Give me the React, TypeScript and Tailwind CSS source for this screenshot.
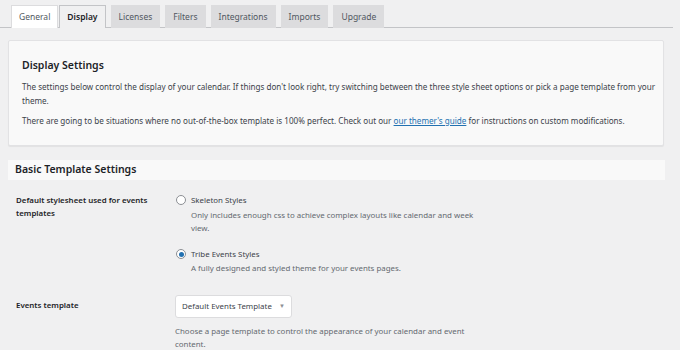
import React from 'react';

const tabs = ['General', 'Display', 'Licenses', 'Filters', 'Integrations', 'Imports', 'Upgrade'];

function Radio({ checked }: { checked?: boolean }) {
    return (
        <span className="mt-[1px] w-[10px] h-[10px] rounded-full border border-[#8c8f94] bg-white flex items-center justify-center shrink-0">
            {checked && <span className="w-[5px] h-[5px] rounded-full bg-[#2271b1]"></span>}
        </span>
    );
}

export default function App() {
    return (
        <div className="w-[680px] h-[350px] overflow-hidden bg-[#f0f0f1] text-[#3c434a] font-['Noto_Sans',sans-serif]">
            {/* tabs */}
            <div className="flex gap-[5px] pl-[11px] pt-[5px] border-b border-[#c3c4c7] mr-[7px]">
                {tabs.map((t) => (
                    <div
                        key={t}
                        className={`h-[23px] px-[7px] flex items-center text-[8.5px] border border-b-0 -mb-[1px] ${t === 'General'
                            ? 'bg-white border-[#dcdcde] text-[#50575e]'
                            : t === 'Display'
                                ? 'bg-[#f0f0f1] border-[#c3c4c7] text-[#1d2327] font-semibold -ml-[4px]'
                                : 'bg-[#dcdcde] border-[#dcdcde] text-[#50575e]'
                            }`}
                    >
                        {t}
                    </div>
                ))}
            </div>

            {/* intro card */}
            <div className="mx-[8px] mr-[16px] mt-[12px] bg-[#f9f9f9] border border-[#e2e2e4] rounded-[2px] shadow-[0_1px_1px_rgba(0,0,0,0.06)] pl-[13px] pr-[6px] pt-[17px] pb-[17px]">
                <h2 className="text-[10.5px] font-semibold text-[#1d2327] leading-[14px]">Display Settings</h2>
                <p className="mt-[8px] text-[8.1px] leading-[14px]">
                    The settings below control the display of your calendar. If things don't look right, try switching between the three style sheet options or pick a page template from your theme.
                </p>
                <p className="mt-[6px] text-[8.1px] leading-[14px]">
                    There are going to be situations where no out-of-the-box template is 100% perfect. Check out our{' '}
                    <a className="text-[#2271b1] underline">our themer's guide</a> for instructions on custom modifications.
                </p>
            </div>

            {/* section header */}
            <div className="mx-[8px] mr-[15px] mt-[14px] h-[20px] bg-[#f9f9f9] pl-[7px] flex items-center">
                <h3 className="text-[10.5px] font-semibold text-[#1d2327]">Basic Template Settings</h3>
            </div>

            {/* rows */}
            <div className="pl-[16px] pt-[14px] text-[7.9px]">
                <div className="flex">
                    <div className="w-[160px] font-semibold text-[#1d2327] leading-[13px] pr-[10px]">
                        Default stylesheet used for events templates
                    </div>
                    <div className="flex flex-col gap-[13px]">
                        <div className="flex gap-[5px]">
                            <Radio />
                            <div>
                                <div className="leading-[12px]">Skeleton Styles</div>
                                <div className="text-[#646970] leading-[13px] mt-[3px] w-[290px]">
                                    Only includes enough css to achieve complex layouts like calendar and week view.
                                </div>
                            </div>
                        </div>
                        <div className="flex gap-[5px]">
                            <Radio checked />
                            <div>
                                <div className="leading-[12px]">Tribe Events Styles</div>
                                <div className="text-[#646970] leading-[13px] mt-[2px]">
                                    A fully designed and styled theme for your events pages.
                                </div>
                            </div>
                        </div>
                    </div>
                </div>

                <div className="flex mt-[20px]">
                    <div className="w-[159px] font-semibold text-[#1d2327] pt-[5px]">Events template</div>
                    <div>
                        <div className="w-[117px] h-[23px] bg-white border border-[#dcdcde] rounded-[3px] flex items-center justify-between pl-[6px] pr-[6px]">
                            <span>Default Events Template</span>
                            <span className="text-[6px] text-[#8c8f94]">▼</span>
                        </div>
                        <div className="text-[#646970] leading-[13px] mt-[7px] w-[300px]">
                            Choose a page template to control the appearance of your calendar and event content.
                        </div>
                    </div>
                </div>
            </div>
        </div>
    );
}
